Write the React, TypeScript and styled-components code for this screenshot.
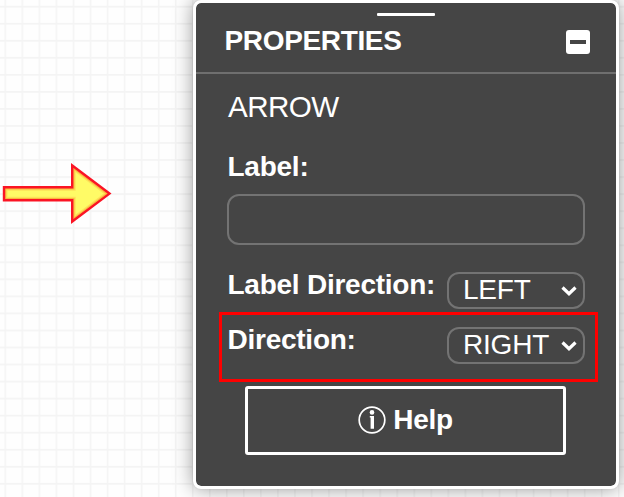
import React from "react";
import styled, { createGlobalStyle } from "styled-components";

const GlobalStyle = createGlobalStyle`
  * { box-sizing: border-box; }
  body { margin: 0; overflow: hidden; }
`;

const Canvas = styled.main`
  position: relative;
  display: flex;
  align-items: flex-start;
  width: 624px;
  height: 497px;
  overflow: hidden;
  font-family: "Liberation Sans", Arial, Helvetica, sans-serif;
  background-color: #fefefe;
`;

const GridLines = styled.svg`
  position: absolute;
  inset: 0;
`;

const ArrowShape = styled.svg`
  position: absolute;
  left: 0;
  top: 158px;
`;

const Panel = styled.section`
  position: relative;
  width: 426px;
  height: 488.5px;
  margin-left: 193px;
  border: 3px solid #fff;
  border-radius: 8px;
  background: #454545;
  background-clip: padding-box;
  color: #fff;
  box-shadow: 0 0 20px rgba(0, 0, 0, 0.4), 0 0 2px rgba(0, 0, 0, 0.1);
`;

const Header = styled.header`
  display: flex;
  flex-direction: column;
  height: 71px;
  padding: 10px 26px 0 29.5px;
  border-bottom: 2px solid #6f6f6f;
`;

const DragHandle = styled.div`
  width: 58px;
  height: 3px;
  margin-left: 151.5px;
  border-radius: 1px;
  background: #fff;
`;

const TitleRow = styled.div`
  display: flex;
  align-items: center;
  justify-content: space-between;
  height: 32px;
  margin-top: 9px;
`;

const Title = styled.h1`
  margin: 0 0 0 -1px;
  font-size: 28px;
  letter-spacing: -0.35px;
  line-height: 32px;
  white-space: nowrap;
`;

const CollapseButton = styled.button`
  display: flex;
  align-items: center;
  justify-content: center;
  width: 24px;
  height: 24px;
  margin-top: 2px;
  padding: 0;
  border: 0;
  border-radius: 3px;
  background: #fff;

  &::before {
    content: "";
    width: 16px;
    height: 4px;
    background: #454545;
  }
`;

const Body = styled.div`
  display: flex;
  flex-direction: column;
  padding: 17px 31px 0;
`;

const Kind = styled.div`
  height: 32px;
  padding-left: 1px;
  font-size: 29.6px;
  letter-spacing: -0.55px;
  line-height: 32px;
`;

const Caption = styled.label`
  padding-left: 0.5px;
  font-size: 28px;
  font-weight: 700;
  letter-spacing: -0.25px;
  line-height: 32px;
  white-space: nowrap;
`;

const LabelField = styled.div`
  display: flex;
  flex-direction: column;
  gap: 11px;
  margin-top: 28px;
`;

const TextInput = styled.input`
  width: 358px;
  height: 51px;
  padding: 0 12px;
  border: 2px solid #737373;
  border-radius: 12px;
  background: transparent;
  color: #fff;
  font: inherit;
  outline: none;
`;

const Options = styled.div`
  display: flex;
  flex-direction: column;
  gap: 18px;
  margin-top: 27px;
`;

const Row = styled.div`
  display: flex;
  align-items: flex-start;
  justify-content: space-between;
  height: 37px;

  ${Caption} {
    margin-top: -3px;
  }
`;

const Select = styled.button`
  display: flex;
  align-items: center;
  justify-content: space-between;
  width: 138px;
  height: 37px;
  padding: 0 6px 2px 14px;
  border: 2px solid #737373;
  border-radius: 12px;
  background: transparent;
  color: #fff;
  font-family: inherit;
  font-size: 28px;
  letter-spacing: -0.2px;
  line-height: 32px;
`;

const Chevron = styled.svg`
  flex: none;
  margin-top: 3px;
`;

const HelpButton = styled.button`
  display: flex;
  align-items: center;
  justify-content: center;
  gap: 7px;
  width: 321px;
  height: 69px;
  margin: 22px 0 0 18px;
  padding: 0 0 2px;
  border: 3.5px solid #fff;
  border-radius: 3px;
  background: transparent;
  color: #fff;
  font-family: inherit;
  font-size: 28px;
  font-weight: 700;
  letter-spacing: -0.3px;
  line-height: 32px;
`;

const Highlight = styled.div`
  position: absolute;
  left: 219px;
  top: 312px;
  width: 379px;
  height: 70px;
  border: 3px solid #fe0000;
`;

const arrowOutline = "M4 187.2H72.2V165.5L109.5 193.6 72.2 221.5V200.2H4Z";

function Dropdown({ value }: { value: string }) {
  return (
    <Select type="button">
      {value}
      <Chevron width="16" height="12" viewBox="0 0 16 12">
        <path d="M1.5 2.5 8 8.7 14.5 2.5" fill="none" stroke="#fff" strokeWidth="3.2" />
      </Chevron>
    </Select>
  );
}

export default function App() {
  return (
    <Canvas>
      <GlobalStyle />
      <GridLines width="624" height="497">
        <defs>
          <pattern id="grid" x="4.5" y="5.8" width="17.04" height="17.04" patternUnits="userSpaceOnUse">
            <path d="M.8 0V17.04M0 .8H17.04" stroke="#f4f4f4" strokeWidth="1.5" />
          </pattern>
        </defs>
        <rect width="624" height="497" fill="url(#grid)" />
      </GridLines>
      <ArrowShape width="120" height="72" viewBox="0 158 120 72">
        <defs>
          <clipPath id="arrowClip">
            <path d={arrowOutline} />
          </clipPath>
        </defs>
        <path d={arrowOutline} fill="#fffb66" />
        <g clipPath="url(#arrowClip)" fill="none">
          <path d={arrowOutline} stroke="#fde25a" strokeWidth="7" />
          <path d={arrowOutline} stroke="#f9b83f" strokeWidth="4.6" />
        </g>
        <path d={arrowOutline} fill="none" stroke="#fb1424" strokeWidth="2.4" />
      </ArrowShape>
      <Panel>
        <Header>
          <DragHandle />
          <TitleRow>
            <Title>PROPERTIES</Title>
            <CollapseButton aria-label="Collapse" />
          </TitleRow>
        </Header>
        <Body>
          <Kind>ARROW</Kind>
          <LabelField>
            <Caption htmlFor="label">Label:</Caption>
            <TextInput id="label" />
          </LabelField>
          <Options>
            <Row>
              <Caption>Label Direction:</Caption>
              <Dropdown value="LEFT" />
            </Row>
            <Row>
              <Caption>Direction:</Caption>
              <Dropdown value="RIGHT" />
            </Row>
          </Options>
          <HelpButton type="button">
            <svg width="28" height="28" viewBox="0 0 28 28">
              <circle cx="14" cy="14" r="12.8" fill="none" stroke="#fff" strokeWidth="1.7" />
              <path d="M11.8 10.1H16V22.8H12.6V11.4H11.8Z" fill="#fff" />
              <circle cx="14" cy="6.4" r="2.3" fill="#fff" />
            </svg>
            Help
          </HelpButton>
        </Body>
      </Panel>
      <Highlight />
    </Canvas>
  );
}
